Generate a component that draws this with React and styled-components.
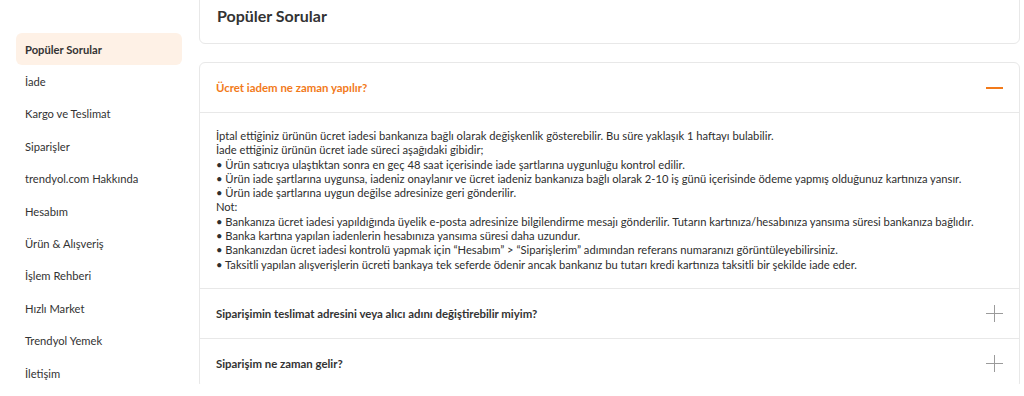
import React, { useState } from "react";
import styled, { createGlobalStyle } from "styled-components";

const GlobalStyle = createGlobalStyle`
  html, body {
    margin: 0;
    padding: 0;
    background: #fff;
    font-family: Lato, "Liberation Sans", sans-serif;
    color: #333;
    overflow: hidden;
  }
`;

const menu = [
  "Popüler Sorular",
  "İade",
  "Kargo ve Teslimat",
  "Siparişler",
  "trendyol.com Hakkında",
  "Hesabım",
  "Ürün & Alışveriş",
  "İşlem Rehberi",
  "Hızlı Market",
  "Trendyol Yemek",
  "İletişim",
];

const answer = [
  "İptal ettiğiniz ürünün ücret iadesi bankanıza bağlı olarak değişkenlik gösterebilir. Bu süre yaklaşık 1 haftayı bulabilir.",
  "İade ettiğiniz ürünün ücret iade süreci aşağıdaki gibidir;",
  "• Ürün satıcıya ulaştıktan sonra en geç 48 saat içerisinde iade şartlarına uygunluğu kontrol edilir.",
  "• Ürün iade şartlarına uygunsa, iadeniz onaylanır ve ücret iadeniz bankanıza bağlı olarak 2-10 iş günü içerisinde ödeme yapmış olduğunuz kartınıza yansır.",
  "• Ürün iade şartlarına uygun değilse adresinize geri gönderilir.",
  "Not:",
  "• Bankanıza ücret iadesi yapıldığında üyelik e-posta adresinize bilgilendirme mesajı gönderilir. Tutarın kartınıza/hesabınıza yansıma süresi bankanıza bağlıdır.",
  "• Banka kartına yapılan iadenlerin hesabınıza yansıma süresi daha uzundur.",
  "• Bankanızdan ücret iadesi kontrolü yapmak için “Hesabım” > “Siparişlerim” adımından referans numaranızı görüntüleyebilirsiniz.",
  "• Taksitli yapılan alışverişlerin ücreti bankaya tek seferde ödenir ancak bankanız bu tutarı kredi kartınıza taksitli bir şekilde iade eder.",
];

const questions = [
  { q: "Ücret iadem ne zaman yapılır?", a: answer },
  { q: "Siparişimin teslimat adresini veya alıcı adını değiştirebilir miyim?" },
  { q: "Siparişim ne zaman gelir?" },
];

export default function App() {
  const [active, setActive] = useState(0);
  const [open, setOpen] = useState(0);

  return (
    <>
      <GlobalStyle />
      <Viewport>
        <Page>
          <Sidebar>
            {menu.map((m, i) => (
              <MenuItem key={m} active={i === active} onClick={() => setActive(i)}>
                {m}
              </MenuItem>
            ))}
          </Sidebar>
          <Main>
            <TitleCard>
              <Title>Popüler Sorular</Title>
            </TitleCard>
            <FaqCard>
              {questions.map((item, i) => (
                <FaqItem key={item.q}>
                  <FaqHeader onClick={() => setOpen(open === i ? -1 : i)}>
                    <Question open={open === i}>{item.q}</Question>
                    {open === i ? <Minus /> : <Plus />}
                  </FaqHeader>
                  {open === i && item.a && (
                    <Answer>
                      {item.a.map((line, j) => (
                        <Line key={j}>{line}</Line>
                      ))}
                    </Answer>
                  )}
                </FaqItem>
              ))}
            </FaqCard>
          </Main>
        </Page>
      </Viewport>
    </>
  );
}

/* the page is scrolled a bit and cut at the bottom, like the screenshot */
const Viewport = styled.div`
  height: 384px;
  overflow: hidden;
`;

const Page = styled.div`
  display: flex;
  align-items: flex-start;
  gap: 17px;
  padding-left: 16px;
  margin-top: -20px;
`;

const Sidebar = styled.nav`
  width: 166px;
  display: flex;
  flex-direction: column;
  padding-top: 53px;
`;

const MenuItem = styled.div`
  height: 32.4px;
  display: flex;
  align-items: center;
  padding-left: 9px;
  border-radius: 6px;
  font-size: 11.2px;
  font-weight: ${(p) => (p.active ? 700 : 400)};
  color: #333;
  background: ${(p) => (p.active ? "#fef1e6" : "transparent")};
  cursor: pointer;
  white-space: nowrap;
`;

const Main = styled.main`
  width: 821px;
  display: flex;
  flex-direction: column;
  gap: 18px;
`;

const TitleCard = styled.div`
  height: 64px;
  border: 1px solid #e8e8e8;
  border-radius: 6px;
  display: flex;
  align-items: center;
  padding: 7px 17px 0;
  box-sizing: border-box;
`;

const Title = styled.h1`
  margin: 0;
  font-size: 16px;
  font-weight: 700;
  color: #333;
`;

const FaqCard = styled.section`
  border: 1px solid #e8e8e8;
  border-radius: 6px;
`;

const FaqItem = styled.div`
  & + & {
    border-top: 1px solid #e8e8e8;
  }
`;

const FaqHeader = styled.div`
  height: 49px;
  display: flex;
  align-items: center;
  justify-content: space-between;
  padding: 0 16px;
  cursor: pointer;
`;

const Question = styled.span`
  font-size: 11.4px;
  font-weight: 700;
  color: ${(p) => (p.open ? "#f27a1a" : "#333")};
  white-space: nowrap;
`;

const Minus = styled.span`
  width: 17px;
  height: 2px;
  background: #f27a1a;
`;

const Plus = styled.span`
  position: relative;
  width: 17px;
  height: 17px;

  &::before,
  &::after {
    content: "";
    position: absolute;
    background: #9b9b9b;
  }
  &::before {
    left: 0;
    right: 0;
    top: 8px;
    height: 1px;
  }
  &::after {
    top: 0;
    bottom: 0;
    left: 8px;
    width: 1px;
  }
`;

const Answer = styled.div`
  border-top: 1px solid #e8e8e8;
  padding: 16px 16px 16px;
`;

const Line = styled.div`
  font-size: 11.2px;
  line-height: 14.3px;
  color: #2e2e2e;
  white-space: nowrap;
`;
